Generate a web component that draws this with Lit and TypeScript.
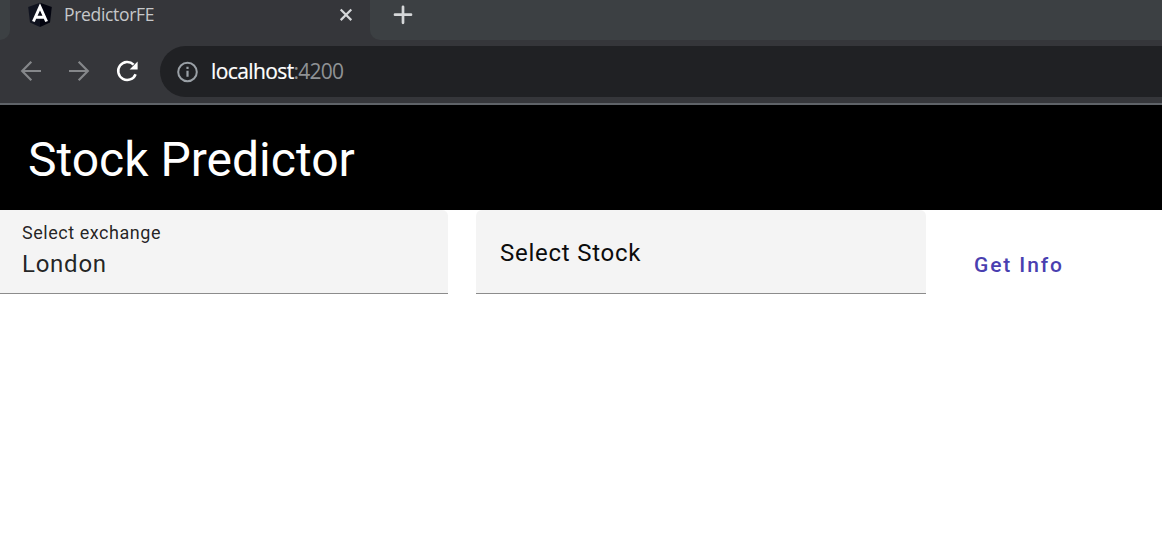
import { LitElement, html, css } from "lit";
import { customElement } from "lit/decorators.js";

@customElement("app-root")
export class AppRoot extends LitElement {
  static styles = css`
    :host { display: block; height: 546px; overflow: hidden; background: #fff; font-family: Roboto, sans-serif; }
    * { box-sizing: border-box; }
    svg { display: block; flex: none; }
    .chrome { background: #35363a; border-bottom: 2px solid #5f6368; height: 105px; font-family: "Open Sans", "Noto Sans", sans-serif; }
    .strip { display: flex; height: 40px; }
    .prev { width: 10px; background: #3c4043; border-bottom-right-radius: 10px; }
    .tab { width: 360px; display: flex; align-items: flex-start; padding: 2px 16px 0 18px; }
    .title { margin-left: 12px; flex: 1; font-size: 17.5px; line-height: 24px; letter-spacing: -0.33px; color: #c6c8ca; white-space: nowrap; }
    .close { margin-top: 5px; }
    .rest { flex: 1; background: #3c4043; border-bottom-left-radius: 10px; padding: 5px 0 0 23px; }
    .toolbar { display: flex; height: 63px; padding: 6px 0 6px 19px; align-items: center; }
    .nav { display: flex; gap: 24px; width: 141px; padding-bottom: 1px; }
    .omni { flex: 1; height: 51px; border-radius: 26px 0 0 26px; background: #202124; display: flex; align-items: center; padding-left: 16px; }
    .url { margin-left: 12px; font-size: 21px; line-height: 30px; letter-spacing: -0.8px; color: #fff; white-space: nowrap; padding-bottom: 2px; -webkit-text-stroke: .2px; }
    .host { letter-spacing: -0.6px; }
    .port { color: #8f9295; -webkit-text-stroke: 0; }
    .header { height: 105px; background: #000; color: #fff; padding: 27px 28px 0; font-size: 48px; line-height: 56px; white-space: nowrap; }
    .row { display: flex; }
    .field { height: 84px; background: #f4f4f4; border-bottom: 1px solid #8c8c8c; border-radius: 6px 6px 0 0; color: rgba(0,0,0,.87); }
    .exchange { width: 448px; margin-right: 28px; padding: 12px 22px 0; border-top-left-radius: 0; }
    .stock { width: 450px; padding: 27px 24px 0; color: #0c0c0c; }
    .label { font-size: 18px; line-height: 22px; letter-spacing: .54px; }
    .value { font-size: 24px; line-height: 32px; letter-spacing: .75px; margin-top: 4px; }
    .stock .value { margin: 0; }
    .action { margin: 41px 0 0 48px; padding: 0; border: 0; background: none; height: 28px; font: 500 21px/28px Roboto, sans-serif; letter-spacing: 1.9px; color: #4a3fb0; }
  `;

  render() {
    return html`
      <div class="chrome">
        <div class="strip">
          <div class="prev"></div>
          <div class="tab">
            <svg width="24" height="26" viewBox="0 0 24 26">
              <path fill="#10131f" d="M12 .8 .2 5l1.8 15.6L12 25z" />
              <path fill="#03040f" d="M12 .8 23.8 5 22 20.6 12 25z" />
              <path fill="none" stroke="#fff" stroke-width="2.9" d="M5.4 19.5 12 4.8l6.6 14.7M8 15.2h8" />
            </svg>
            <span class="title">PredictorFE</span>
            <svg class="close" width="16" height="16" viewBox="0 0 16 16">
              <path stroke="#d5d7d9" stroke-width="2.2" d="m2.7 2.5 10.6 10.6m0-10.6L2.7 13.1" />
            </svg>
          </div>
          <div class="rest">
            <svg width="20" height="20" viewBox="0 0 20 20">
              <path stroke="#d5d7d9" stroke-width="2.7" stroke-linecap="round" d="M10 1.8v16M2 9.7h16" />
            </svg>
          </div>
        </div>
        <div class="toolbar">
          <div class="nav">
            <svg width="24" height="24" viewBox="0 0 24 24">
              <path fill="none" stroke="#85878a" stroke-width="2.2" d="M22 12H3.5M12.3 2.8 3.2 12l9.1 9.2" />
            </svg>
            <svg width="24" height="24" viewBox="0 0 24 24">
              <path fill="none" stroke="#85878a" stroke-width="2.2" d="M2 12h18.5M11.7 2.8l9.1 9.2-9.1 9.2" />
            </svg>
            <svg width="24" height="24" viewBox="0 0 24 24">
              <path fill="none" stroke="#fff" stroke-width="2.5" d="M20.6 15.2A9 9 0 1 1 18.6 5.6" />
              <path fill="#fff" d="M22.6 2.5v8h-8z" />
            </svg>
          </div>
          <div class="omni">
            <svg width="23" height="23" viewBox="0 0 23 23">
              <circle cx="11.5" cy="12" r="9.3" fill="none" stroke="#9aa0a6" stroke-width="2" />
              <path stroke="#9aa0a6" stroke-width="2.2" d="M11.5 10.8v6M11.5 6.8V9" />
            </svg>
            <span class="url"><span class="host">localhost</span><span class="port">:4200</span></span>
          </div>
        </div>
      </div>
      <div class="header">Stock Predictor</div>
      <div class="row">
        <div class="field exchange">
          <div class="label">Select exchange</div>
          <div class="value">London</div>
        </div>
        <div class="field stock"><div class="value">Select Stock</div></div>
        <button class="action">Get Info</button>
      </div>
    `;
  }
}
